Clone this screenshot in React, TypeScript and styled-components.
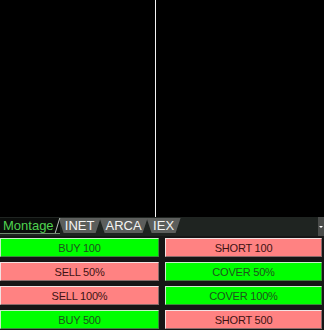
import React from "react";
import styled, { createGlobalStyle } from "styled-components";

const Global = createGlobalStyle`
  html, body { margin: 0; padding: 0; background: #161616; }
  body { width: 324px; height: 330px; overflow: hidden; font-family: "Liberation Sans", Arial, sans-serif; }
`;

const Page = styled.div`
  width: 324px;
  height: 330px;
  display: flex;
  flex-direction: column;
  background: #161616;
`;

const Chart = styled.div`
  height: 217px;
  display: grid;
  grid-template-columns: 155px 1px 1fr;
  background: #000;
`;

const Pane = styled.div`
  background: #000;
`;

const Divider = styled.div`
  background: #f4f4f4;
`;

const TabBar = styled.div`
  height: 19px;
  display: flex;
  align-items: flex-start;
  background: #1f2421;
  position: relative;
`;

const ActiveTab = styled.div`
  position: relative;
  height: 15px;
  padding: 0 6px 0 3px;
  display: flex;
  align-items: center;
  font-size: 13px;
  color: #4fd24f;
  background: #0a0d0b;
  border-bottom: 1px solid #6f8a6f;
  margin-top: 1px;
  z-index: 2;
  &::after {
    content: "";
    position: absolute;
    right: 2px;
    top: 0;
    width: 1px;
    height: 100%;
    background: #b8c0b8;
    transform: skewX(-17deg);
  }
`;

const Tab = styled.div<{ $w: number }>`
  height: 15px;
  width: ${(p) => p.$w}px;
  margin-top: 1px;
  margin-left: -1px;
  display: flex;
  align-items: center;
  justify-content: center;
  font-size: 13px;
  color: #f4f4f4;
  background: #5c5e5c;
  clip-path: polygon(0 0, 100% 0, calc(100% - 5px) 100%, 5px 100%);
`;

const Spacer = styled.div`
  flex: 1;
`;

const ScrollButton = styled.div`
  width: 6px;
  height: 19px;
  background: #4a4c4a;
  display: flex;
  align-items: center;
  justify-content: center;
  &::before {
    content: "";
    width: 0;
    height: 0;
    border-left: 2px solid transparent;
    border-right: 2px solid transparent;
    border-top: 2px solid #ffffff;
  }
`;

const Grid = styled.div`
  display: grid;
  grid-template-columns: 159px 157px;
  column-gap: 6px;
  row-gap: 5px;
  padding-top: 2px;
`;

const Btn = styled.div<{ $kind: "buy" | "sell" }>`
  height: 19px;
  box-sizing: border-box;
  display: flex;
  align-items: center;
  justify-content: center;
  font-size: 11px;
  letter-spacing: -0.2px;
  background: ${(p) => (p.$kind === "buy" ? "#00ff00" : "#ff8282")};
  color: ${(p) => (p.$kind === "buy" ? "#1d531d" : "#3d1212")};
  border-top: 1px solid ${(p) => (p.$kind === "buy" ? "#c8f0c8" : "#f2e2e2")};
  border-left: 1px solid ${(p) => (p.$kind === "buy" ? "#c8f0c8" : "#f2e2e2")};
  border-bottom: 1px solid ${(p) => (p.$kind === "buy" ? "#3a8a3a" : "#8a6a6a")};
  border-right: 1px solid ${(p) => (p.$kind === "buy" ? "#3a8a3a" : "#8a6a6a")};
`;

const buttons: { label: string; kind: "buy" | "sell" }[] = [
  { label: "BUY 100", kind: "buy" },
  { label: "SHORT 100", kind: "sell" },
  { label: "SELL 50%", kind: "sell" },
  { label: "COVER 50%", kind: "buy" },
  { label: "SELL 100%", kind: "sell" },
  { label: "COVER 100%", kind: "buy" },
  { label: "BUY 500", kind: "buy" },
  { label: "SHORT 500", kind: "sell" },
];

export default function App() {
  return (
    <Page>
      <Global />
      <Chart>
        <Pane />
        <Divider />
        <Pane />
      </Chart>
      <TabBar>
        <ActiveTab>Montage</ActiveTab>
        <Tab $w={42}>INET</Tab>
        <Tab $w={48}>ARCA</Tab>
        <Tab $w={34}>IEX</Tab>
        <Spacer />
        <ScrollButton />
      </TabBar>
      <Grid>
        {buttons.map((b) => (
          <Btn key={b.label} $kind={b.kind}>
            {b.label}
          </Btn>
        ))}
      </Grid>
    </Page>
  );
}
